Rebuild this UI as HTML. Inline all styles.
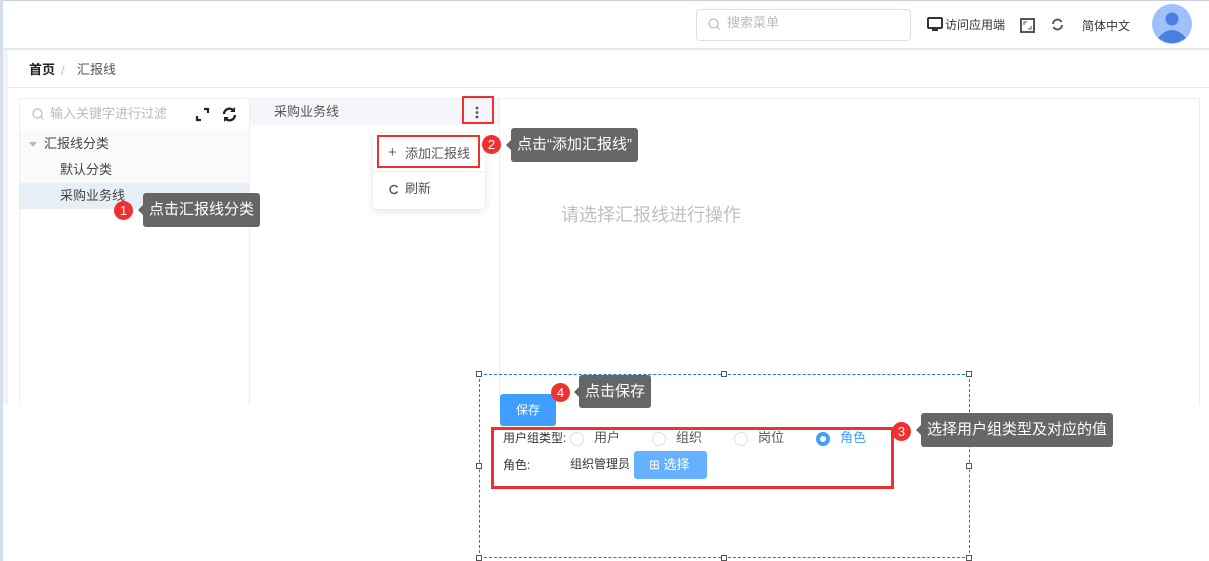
<!DOCTYPE html>
<html><head><meta charset="utf-8"><style>
*{margin:0;padding:0;box-sizing:border-box}
body{width:1209px;height:561px;position:relative;overflow:hidden;background:#fff;font-family:"Liberation Sans","Noto Sans CJK SC",sans-serif;font-size:13px;color:#333}
.a{position:absolute;line-height:16px}
.tip{position:absolute;background:#666;color:#fff;border-radius:3px;font-size:15px;line-height:34px;height:34px;padding:0 6px}
.tip:before{content:"";position:absolute;left:-5px;top:12px;border:5px solid transparent;border-left:0;border-right-color:#666}
.num{position:absolute;width:19px;height:19px;border-radius:50%;background:#f03030;color:#fff;font-size:13px;text-align:center;line-height:19px}
.h{position:absolute;width:6px;height:6px;border:1px solid #555;background:#fff}
.rad{position:absolute;width:14px;height:14px;border:1px solid #dcdfe6;border-radius:50%;background:#fff}
</style></head><body>
<div class="a" style="left:0;top:0;width:1209px;height:1px;background:#c8d0e0"></div>
<div class="a" style="left:0;top:0;width:3px;height:561px;background:#d5ddeb"></div>
<div class="a" style="left:3px;top:50px;width:5px;height:355px;background:#f3f3f6"></div>
<div class="a" style="left:3px;top:48px;width:1206px;height:2px;background:#e6e8ee"></div>
<!-- header -->
<div class="a" style="left:696px;top:9px;width:215px;height:32px;border:1px solid #dcdfe6;border-radius:4px"></div>
<svg class="a" style="left:708px;top:18px" width="12" height="12"><circle cx="5.5" cy="5.5" r="4.5" fill="none" stroke="#bbb" stroke-width="1.2"/><line x1="9" y1="9" x2="11.5" y2="11.5" stroke="#bbb" stroke-width="1.2"/></svg>
<div class="a" style="left:727px;top:15px;color:#bbb;font-size:13px">搜索菜单</div>
<svg class="a" style="left:927px;top:17px" width="16" height="15"><rect x="1" y="1" width="14" height="10" rx="1" fill="none" stroke="#333" stroke-width="2"/><rect x="5" y="12" width="6" height="2" fill="#333"/></svg>
<div class="a" style="left:945px;top:17px;font-size:12px">访问应用端</div>
<svg class="a" style="left:1020px;top:18px" width="15" height="15"><rect x="1" y="1" width="13" height="13" fill="none" stroke="#555" stroke-width="2"/><path d="M4 7V4h3M11 8v3H8" stroke="#555" fill="none"/></svg>
<svg class="a" style="left:1051px;top:18px" width="13" height="13"><path d="M2 6A4.5 4.5 0 0 1 10.5 4M11 7A4.5 4.5 0 0 1 2.5 9" stroke="#555" stroke-width="2" fill="none"/></svg>
<div class="a" style="left:1082px;top:18px;font-size:12px">简体中文</div>
<svg class="a" style="left:1152px;top:4px" width="40" height="40"><circle cx="20" cy="20" r="20" fill="#9fc1fb"/><circle cx="20" cy="15" r="6.5" fill="#4a7fe0"/><path d="M6 34Q20 18 34 34Q20 44 6 34Z" fill="#4a7fe0"/></svg>
<!-- breadcrumb -->
<div class="a" style="left:29px;top:62px;font-weight:bold;color:#222">首页</div>
<div class="a" style="left:61px;top:63px;color:#c0c4cc">/</div>
<div class="a" style="left:77px;top:62px;color:#555">汇报线</div>
<div class="a" style="left:8px;top:87px;width:1201px;height:1px;background:#e8e8ec"></div>
<!-- panels -->
<div class="a" style="left:19px;top:98px;width:1181px;height:307px;border:1px solid #ebeef5;border-bottom:0"></div>
<div class="a" style="left:249px;top:98px;width:1px;height:307px;background:#ebeef5"></div>
<div class="a" style="left:499px;top:98px;width:1px;height:307px;background:#ebeef5"></div>
<svg class="a" style="left:32px;top:108px" width="12" height="12"><circle cx="5.5" cy="5.5" r="4.5" fill="none" stroke="#bbb" stroke-width="1.2"/><line x1="9" y1="9" x2="11.5" y2="11.5" stroke="#bbb" stroke-width="1.2"/></svg>
<div class="a" style="left:50px;top:106px;color:#bbb">输入关键字进行过滤</div>
<svg class="a" style="left:195px;top:107px" width="15" height="15"><path d="M9 2h4v4M6 13H2V9" stroke="#222" stroke-width="2.2" fill="none"/></svg>
<svg class="a" style="left:221px;top:106px" width="17" height="17"><path d="M3 8A5.5 5.5 0 0 1 13 5M14 9A5.5 5.5 0 0 1 4 12" stroke="#222" stroke-width="2.4" fill="none"/><path d="M14 1v5h-5z" fill="#222"/><path d="M3 16v-5h5z" fill="#222"/></svg>
<div class="a" style="left:20px;top:131px;width:229px;height:52px;background:#fafafa"></div>
<div class="a" style="left:20px;top:183px;width:229px;height:26px;background:#e8eef5"></div>
<div class="a" style="left:29px;top:142px;border:4px solid transparent;border-top:5px solid #bbb"></div>
<div class="a" style="left:44px;top:136px;color:#444">汇报线分类</div>
<div class="a" style="left:60px;top:162px;color:#444">默认分类</div>
<div class="a" style="left:60px;top:188px;color:#444">采购业务线</div>
<div class="a" style="left:250px;top:99px;width:249px;height:26px;background:#f5f6fa"></div>
<div class="a" style="left:274px;top:104px;color:#555">采购业务线</div>
<div class="a" style="left:462px;top:96px;width:32px;height:28px;border:2px solid #f03030"></div>
<svg class="a" style="left:475px;top:106px" width="4" height="13"><circle cx="2" cy="2" r="1.4" fill="#555"/><circle cx="2" cy="6.5" r="1.4" fill="#555"/><circle cx="2" cy="11" r="1.4" fill="#555"/></svg>
<!-- dropdown -->
<div class="a" style="left:373px;top:133px;width:112px;height:76px;background:#fff;border-radius:4px;box-shadow:0 2px 8px rgba(0,0,0,.12)"></div>
<div class="a" style="left:373px;top:171px;width:112px;height:1px;background:#ebeef5"></div>
<div class="a" style="left:377px;top:135px;width:103px;height:33px;border:2px solid #f03030"></div>
<div class="a" style="left:388px;top:145px;color:#666;font-size:15px">+</div>
<div class="a" style="left:405px;top:146px;color:#555">添加汇报线</div>
<svg class="a" style="left:388px;top:184px" width="11" height="11"><path d="M9.5 3.5A4 4 0 1 0 9.5 7.5" stroke="#555" stroke-width="1.4" fill="none"/></svg>
<div class="a" style="left:405px;top:181px;color:#555">刷新</div>
<div class="num" style="left:482px;top:135px">2</div>
<div class="tip" style="left:511px;top:128px">点击“添加汇报线”</div>
<div class="num" style="left:114px;top:201px">1</div>
<div class="tip" style="left:143px;top:193px">点击汇报线分类</div>
<div class="a" style="left:561px;top:205px;color:#c0c0c0;font-size:18px;line-height:20px">请选择汇报线进行操作</div>
<!-- bottom dashed -->
<div class="a" style="left:479px;top:374px;width:491px;height:184px;border:1px dashed #1a7bd6"></div>
<div class="h" style="left:476px;top:371px"></div><div class="h" style="left:721px;top:371px"></div><div class="h" style="left:966px;top:371px"></div>
<div class="h" style="left:476px;top:463px"></div><div class="h" style="left:966px;top:463px"></div>
<div class="h" style="left:476px;top:555px"></div><div class="h" style="left:721px;top:555px"></div><div class="h" style="left:966px;top:555px"></div>
<div class="a" style="left:500px;top:394px;width:56px;height:32px;background:#409eff;border-radius:3px;color:#fff;font-size:12px;text-align:center;line-height:32px">保存</div>
<div class="num" style="left:551px;top:383px">4</div>
<div class="tip" style="left:579px;top:375px;height:33px;line-height:33px">点击保存</div>
<div class="a" style="left:491px;top:427px;width:403px;height:62px;border:3px solid #f03030"></div>
<div class="a" style="left:503px;top:430px;font-size:12px">用户组类型:</div>
<div class="rad" style="left:570px;top:432px"></div><div class="a" style="left:594px;top:430px;color:#555">用户</div>
<div class="rad" style="left:652px;top:432px"></div><div class="a" style="left:676px;top:430px;color:#555">组织</div>
<div class="rad" style="left:734px;top:432px"></div><div class="a" style="left:758px;top:430px;color:#555">岗位</div>
<div class="rad" style="left:816px;top:432px;border:4px solid #409eff"></div><div class="a" style="left:840px;top:430px;color:#409eff">角色</div>
<div class="a" style="left:503px;top:457px;font-size:12px">角色:</div>
<div class="a" style="left:570px;top:456px;font-size:12px">组织管理员</div>
<div class="a" style="left:634px;top:451px;width:73px;height:28px;background:#66b1ff;border-radius:3px;color:#fff;font-size:13px;line-height:28px;padding-left:15px">⊞ 选择</div>
<div class="num" style="left:892px;top:422px">3</div>
<div class="tip" style="left:921px;top:413px">选择用户组类型及对应的值</div>
</body></html>
